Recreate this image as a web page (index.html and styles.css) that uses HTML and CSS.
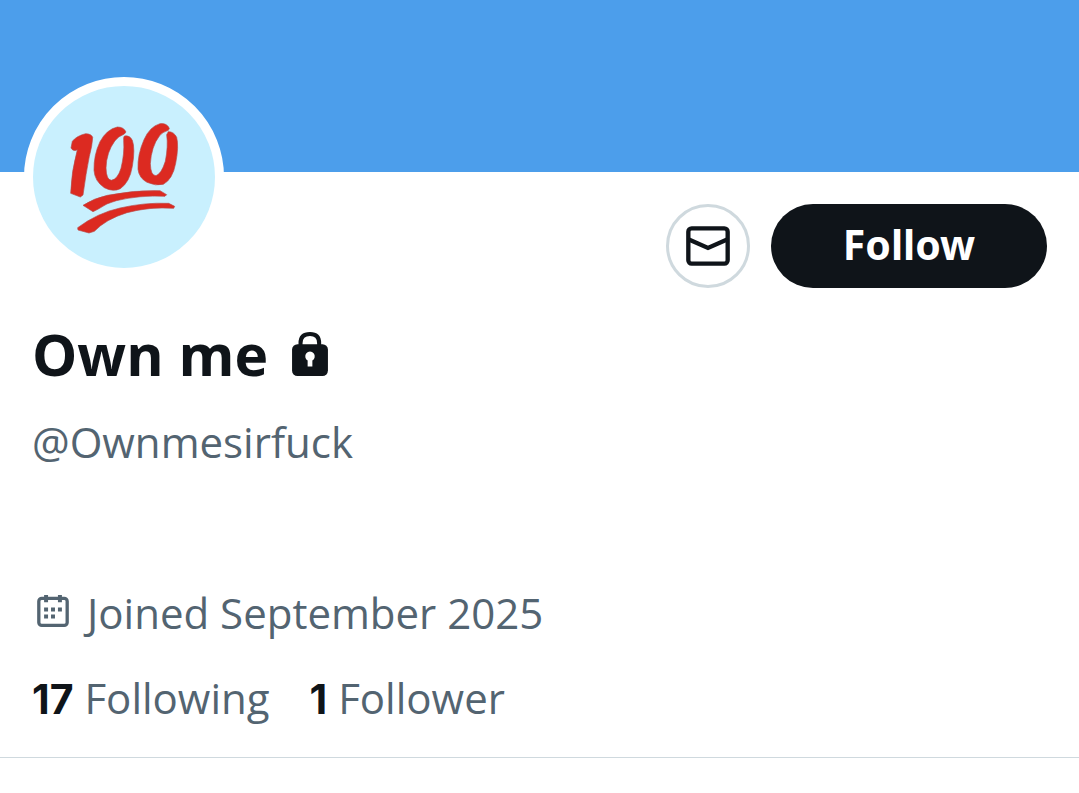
FILE: index.html
```
<!DOCTYPE html>
<html lang="en">
<head>
    <meta charset="UTF-8" />
    <meta name="viewport" content="width=device-width, initial-scale=1.0" />
    <title>Own me (@Ownmesirfuck)</title>
    <link rel="stylesheet" href="styles.css">
</head>
<body>

<div class="banner"></div>

<main class="profile">
    <div class="profile-top">
        <a href="#" class="avatar" aria-label="Profile photo">
            <svg viewBox="-96 -96 546 546" aria-hidden="true">
                <g fill="#dc2a21" stroke="#b94a49" stroke-width="2" stroke-linejoin="round">
                    <path d="M18 90 L22 70 Q34 54 62 47 Q80 48 83 58 Q82 82 73 115 Q63 165 54 231 L46 237 L17 226 Q19 160 37 95 Q25 102 18 90Z"/>
                    <path d="M183 42 Q176 27 157 27 Q125 34 105 71 Q86 111 87 157 Q89 190 118 209 Q144 223 166 212 Q194 193 202 145 Q211 92 202 67 Q194 51 178 54 Q175 58 176 68 Q179 106 168 151 Q158 184 139 187 Q124 186 123 150 Q124 103 150 68 Q160 55 178 48Z"/>
                    <path d="M313 31 Q306 15 285 17 Q254 26 237 65 Q217 110 219 154 Q222 180 246 193 Q272 205 295 199 Q323 184 332 136 Q342 85 335 58 Q327 41 310 41 L305 50 Q310 85 301 130 Q289 168 273 173 Q257 173 256 137 Q259 86 283 54 Q292 42 310 37Z"/>
                    <path d="M54 262 Q86 241 127 232 Q205 216 285 218 L305 230 L300 235 Q224 231 154 248 Q125 255 100 273 L84 281Z"/>
                    <path d="M38 329 Q97 285 165 270 Q238 253 311 256 L329 265 L326 271 Q252 266 186 284 Q123 303 88 340 L72 345 L39 336Z"/>
                </g>
            </svg>
        </a>
        <div class="actions">
            <button type="button" class="btn-message" aria-label="Message">
                <svg viewBox="95 107 130 120" aria-hidden="true">
                    <rect x="101" y="114" width="118" height="106" rx="10" fill="none" stroke="#0f1419" stroke-width="13"/>
                    <path d="M101 147 L160 173 L219 147" fill="none" stroke="#0f1419" stroke-width="13"/>
                </svg>
            </button>
            <button type="button" class="btn-follow">Follow</button>
        </div>
    </div>

    <h1 class="name">
        Own me
        <svg class="lock" viewBox="35 33 106 130" role="img" aria-label="Protected account">
            <path d="M60 76 V66 Q60 39 88 39 Q115 39 115 66 V76" fill="none" stroke="#0f1419" stroke-width="12"/>
            <rect x="35" y="69" width="106" height="94" rx="16" fill="#0f1419"/>
            <path d="M81 135 V117 A14 14 0 1 1 95 117 V135Z" fill="#fff"/>
        </svg>
    </h1>
    <p class="handle">@Ownmesirfuck</p>

    <p class="joined">
        <svg class="calendar" viewBox="22 27 96 97" aria-hidden="true">
            <rect x="27" y="37" width="86" height="82" rx="9" fill="none" stroke="#536471" stroke-width="10"/>
            <path d="M49 27 V49 M91 27 V49" fill="none" stroke="#536471" stroke-width="12"/>
            <path d="M43 65h12v12h-12z M64 65h12v12h-12z M85 65h12v12h-12z M43 86h12v12h-12z M64 86h12v12h-12z" fill="#536471"/>
        </svg>
        <span>Joined September 2025</span>
    </p>

    <div class="stats">
        <a href="#"><b>17</b> Following</a>
        <a href="#"><b>1</b> Follower</a>
    </div>
</main>

</body>
</html>
```
FILE: styles.css
```
* {
    box-sizing: border-box;
    margin: 0;
    padding: 0;
}

body {
    font-family: 'Open Sans', sans-serif;
    font-size: 42px;
    line-height: 56px;
    color: #536471;
    background: #fff;
}

svg {
    display: block;
}

.banner {
    height: 172px;
    background: #4c9eeb;
}

.profile {
    padding: 0 32px 30px;
    border-bottom: 1px solid #cfd9de;
}

.profile-top {
    display: flex;
    justify-content: space-between;
    align-items: flex-start;
}

.avatar {
    width: 200px;
    height: 200px;
    margin: -95px 0 0 -8px;
    border: 9px solid #fff;
    border-radius: 50%;
    background: #c9f0fe;
    overflow: hidden;
}

.actions {
    display: flex;
    gap: 21px;
    margin-top: 32px;
}

button {
    height: 84px;
    border-radius: 42px;
    cursor: pointer;
}

.btn-message {
    display: flex;
    justify-content: center;
    align-items: center;
    width: 84px;
    border: 3px solid #cfd9de;
    background: #fff;
}

.btn-message svg {
    width: 44px;
    height: 40px;
}

.btn-follow {
    min-width: 276px;
    padding: 0 32px 4px;
    border: none;
    background: #0f1419;
    color: #fff;
    font-family: 'Noto Sans', sans-serif;
    font-size: 41px;
    font-weight: 700;
}

.name {
    display: flex;
    align-items: center;
    gap: 24px;
    margin-top: 30px;
    font-size: 57px;
    font-weight: 700;
    line-height: 72px;
    color: #0f1419;
}

.lock {
    width: 36px;
    height: 44px;
}

.handle {
    margin-top: 24px;
}

.joined {
    display: flex;
    align-items: center;
    gap: 18px;
    margin-top: 115px;
    padding-left: 5px;
}

.calendar {
    width: 32px;
    height: 32px;
    margin-bottom: 4px;
}

.stats {
    display: flex;
    gap: 40px;
    margin-top: 29px;
}

.stats a {
    color: inherit;
    text-decoration: none;
}

.stats b {
    font-family: 'Inter', sans-serif;
    font-size: 41px;
    color: #0f1419;
}
```
